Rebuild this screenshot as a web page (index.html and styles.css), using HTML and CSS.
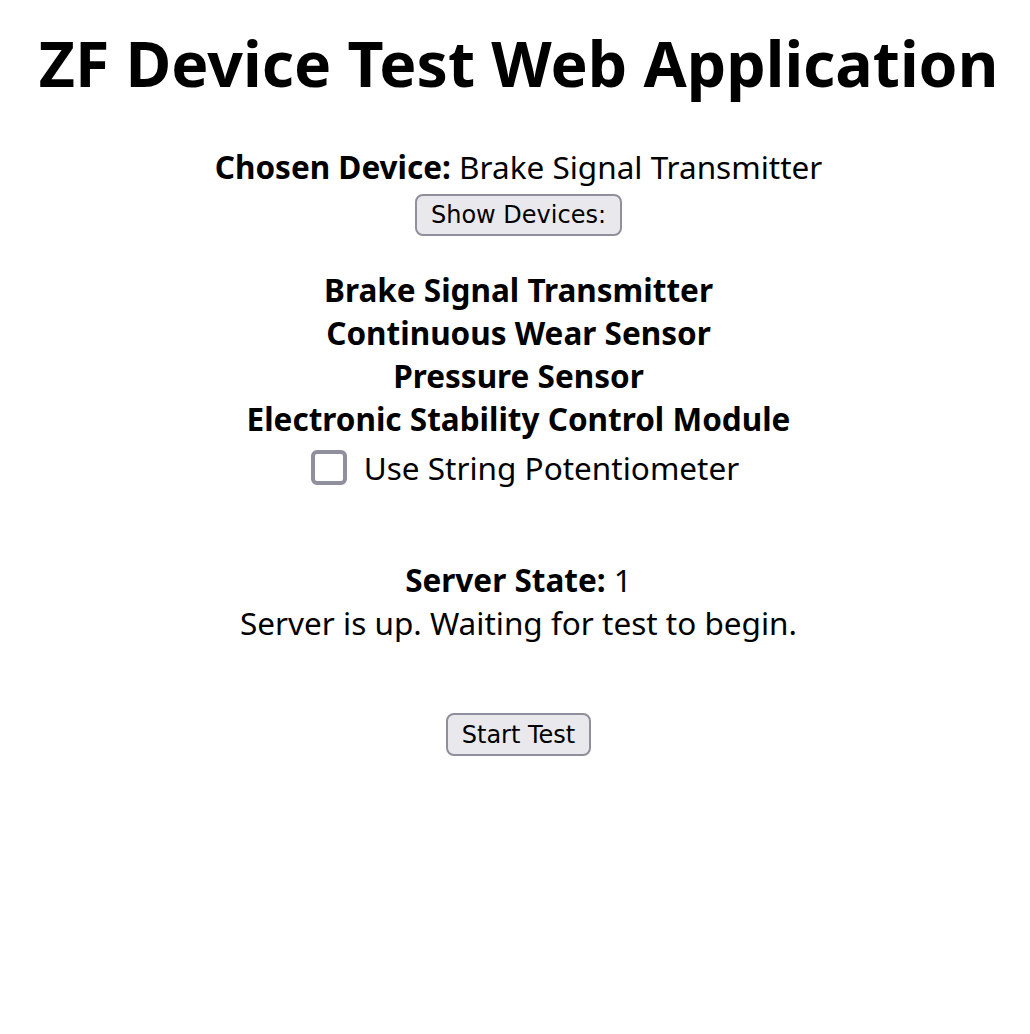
FILE: index.html
```html
<!DOCTYPE html>
<html lang="en">
<head>
<meta charset="utf-8">
<title>ZF Device Test Web Application</title>
<link rel="stylesheet" href="styles.css">
</head>
<body>
<h1 class="title">ZF Device Test Web Application</h1>
<main class="panel">
  <p class="line chosen"><b>Chosen Device:</b> Brake Signal Transmitter</p>
  <button class="btn show-btn" type="button">Show Devices:</button>
  <ul class="devices">
    <li class="line">Brake Signal Transmitter</li>
    <li class="line">Continuous Wear Sensor</li>
    <li class="line">Pressure Sensor</li>
    <li class="line">Electronic Stability Control Module</li>
  </ul>
  <label class="line check"><input class="box" type="checkbox"><span>Use String Potentiometer</span></label>
  <div class="status">
    <p class="line"><b>Server State:</b> 1</p>
    <p class="line">Server is up. Waiting for test to begin.</p>
  </div>
  <button class="btn start-btn" type="button">Start Test</button>
</main>
</body>
</html>
```
FILE: styles.css
```css
html, body {
  margin: 0;
  padding: 0;
  background: #ffffff;
}
body {
  font-family: "Noto Sans", "Open Sans", sans-serif;
  color: #000000;
  padding: 19px 0 0 7px;
}
.title {
  margin: 0;
  font-size: 62.5px;
  line-height: 87px;
  font-weight: 700;
  text-align: center;
}
.panel {
  display: flex;
  flex-direction: column;
  align-items: center;
  font-size: 31.5px;
}
.line {
  margin: 0;
  line-height: 43px;
  text-align: center;
}
.chosen {
  margin-top: 39px;
}
.btn {
  font-family: "DejaVu Sans", sans-serif;
  font-size: 24px;
  line-height: 28px;
  color: #000000;
  background: #e9e9ed;
  border: 2px solid #8f8f9d;
  border-radius: 8px;
  padding: 5px 14px;
  height: 42px;
}
.show-btn {
  margin-top: 6px;
}
.devices {
  list-style: none;
  margin: 32px 0 0;
  padding: 0;
  font-weight: 700;
}
.check {
  display: flex;
  align-items: center;
  gap: 17px;
  margin-top: 6px;
  padding-left: 13px;
}
.box {
  appearance: none;
  -webkit-appearance: none;
  margin: 0;
  width: 36px;
  height: 35px;
  border: 4px solid #8f8f9d;
  border-radius: 6px;
  background: #ffffff;
}
.status {
  margin-top: 69px;
}
.start-btn {
  margin-top: 69px;
  height: 43px;
}
```
